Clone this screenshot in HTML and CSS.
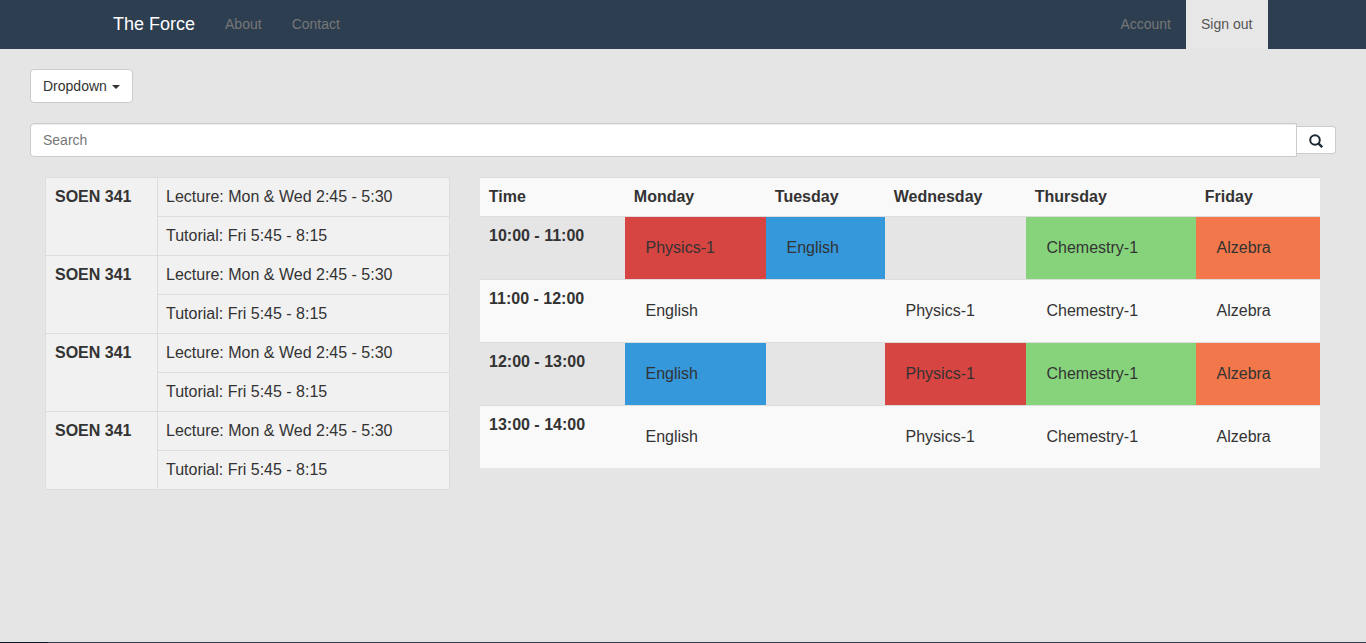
FILE: index.html
```html
<!DOCTYPE html>
<html lang="en">
<head>
  <meta charset="UTF-8">
  <title>The Force</title>
  <link rel="stylesheet" href="styles.css">
</head>
<body>
  <nav class="navbar">
    <a class="brand" href="#">The Force</a>
    <a class="nav-link" href="#">About</a>
    <a class="nav-link" href="#">Contact</a>
    <a class="nav-link nav-right" href="#">Account</a>
    <a class="nav-link active" href="#">Sign out</a>
  </nav>
  <main class="content">
    <button class="btn dropdown-btn" type="button">Dropdown <span class="caret"></span></button>
    <form class="search">
      <input class="search-input" type="text" placeholder="Search">
      <button class="btn search-btn" type="button" aria-label="Search">
        <svg class="search-icon" width="14" height="14" viewBox="0 0 14 14"><circle cx="6" cy="6" r="4.8" fill="none" stroke="#1f2a33" stroke-width="2"/><path d="M9.4 9.4l3.8 3.8" stroke="#1f2a33" stroke-width="2.4"/></svg>
      </button>
    </form>
    <div class="tables">
      <table class="courses">
        <tbody>
          <tr><th rowspan="2">SOEN 341</th><td>Lecture: Mon &amp; Wed 2:45 - 5:30</td></tr>
          <tr><td>Tutorial: Fri 5:45 - 8:15</td></tr>
          <tr><th rowspan="2">SOEN 341</th><td>Lecture: Mon &amp; Wed 2:45 - 5:30</td></tr>
          <tr><td>Tutorial: Fri 5:45 - 8:15</td></tr>
          <tr><th rowspan="2">SOEN 341</th><td>Lecture: Mon &amp; Wed 2:45 - 5:30</td></tr>
          <tr><td>Tutorial: Fri 5:45 - 8:15</td></tr>
          <tr><th rowspan="2">SOEN 341</th><td>Lecture: Mon &amp; Wed 2:45 - 5:30</td></tr>
          <tr><td>Tutorial: Fri 5:45 - 8:15</td></tr>
        </tbody>
      </table>
      <table class="schedule">
        <colgroup>
          <col class="col-time"><col class="col-mon"><col class="col-tue"><col class="col-wed"><col class="col-thu"><col class="col-fri">
        </colgroup>
        <thead>
          <tr><th>Time</th><th>Monday</th><th>Tuesday</th><th>Wednesday</th><th>Thursday</th><th>Friday</th></tr>
        </thead>
        <tbody>
          <tr>
            <th>10:00 - 11:00</th>
            <td class="red"><div class="slot">Physics-1</div></td>
            <td class="blue"><div class="slot">English</div></td>
            <td></td>
            <td class="green"><div class="slot">Chemestry-1</div></td>
            <td class="orange"><div class="slot">Alzebra</div></td>
          </tr>
          <tr>
            <th>11:00 - 12:00</th>
            <td><div class="slot">English</div></td>
            <td></td>
            <td><div class="slot">Physics-1</div></td>
            <td><div class="slot">Chemestry-1</div></td>
            <td><div class="slot">Alzebra</div></td>
          </tr>
          <tr>
            <th>12:00 - 13:00</th>
            <td class="blue"><div class="slot">English</div></td>
            <td></td>
            <td class="red"><div class="slot">Physics-1</div></td>
            <td class="green"><div class="slot">Chemestry-1</div></td>
            <td class="orange"><div class="slot">Alzebra</div></td>
          </tr>
          <tr>
            <th>13:00 - 14:00</th>
            <td><div class="slot">English</div></td>
            <td></td>
            <td><div class="slot">Physics-1</div></td>
            <td><div class="slot">Chemestry-1</div></td>
            <td><div class="slot">Alzebra</div></td>
          </tr>
        </tbody>
      </table>
    </div>
  </main>
  <footer class="bottom-line"><span class="bottom-dark"></span></footer>
</body>
</html>
```

FILE: styles.css
```css
* { box-sizing: border-box; }
html, body { height: 100%; }
body { margin: 0; display: flex; flex-direction: column; font-family: "Liberation Sans", Arial, sans-serif; font-size: 14px; line-height: 20px; color: #333; background-color: #e5e5e5; overflow: hidden; }

.navbar { display: flex; flex: none; height: 49px; padding: 0 98px; background-color: #2c3e50; }
.navbar a { display: block; padding: 14px 15px; text-decoration: none; }
.navbar .brand { font-size: 18px; color: #fff; }
.nav-link { color: #777; }
.nav-right { margin-left: auto; }
.navbar .active { min-width: 82px; background-color: #e7e7e7; color: #555; }

.content { flex: 1; padding: 20px 30px 0; }
.btn { font-family: inherit; font-size: 14px; color: #333; background-color: #fff; border: 1px solid #ccc; }
.dropdown-btn { display: block; height: 34px; padding: 6px 12px; border-radius: 4px; }
.caret { display: inline-block; margin-left: 1px; vertical-align: middle; border-top: 4px solid #333; border-left: 4px solid transparent; border-right: 4px solid transparent; }

.search { display: flex; align-items: center; margin-top: 20px; }
.search-input { flex: 1; height: 34px; padding: 6px 12px; font-family: inherit; font-size: 14px; color: #555; background-color: #fff; border: 1px solid #ccc; border-radius: 4px 0 0 4px; box-shadow: inset 0 1px 1px rgba(0,0,0,0.075); }
.search-input::placeholder { color: #777; }
.search-btn { display: flex; align-items: center; justify-content: center; flex: none; width: 39px; height: 28px; padding: 0; border-left: 0; border-radius: 0 4px 4px 0; }
.search-icon { margin-top: 1px; }

.tables { display: flex; align-items: flex-start; gap: 30px; margin: 20px 0 0 15px; }
table { border-collapse: collapse; font-size: 16px; line-height: 22px; }
th, td { padding: 8px; text-align: left; vertical-align: top; }

.courses { width: 405px; flex: none; background-color: #f1f1f1; }
.courses th, .courses td { padding: 8px; border: 1px solid #ddd; }
.courses th { width: 112px; padding-left: 9px; }

.schedule { width: 840px; flex: none; table-layout: fixed; background-color: #f9f9f9; }
.schedule tr { border-top: 1px solid #ddd; }
.schedule thead th { padding: 8px 8.8px; }
.schedule tbody th { padding: 8px 9px; }
.schedule tbody tr:nth-child(odd) { background-color: #e5e5e5; }
.schedule tbody td { padding: 8px; }
.slot { padding: 12px 12.5px; }
.col-time { width: 145px; }
.col-mon { width: 141px; }
.col-tue { width: 119px; }
.col-wed { width: 141px; }
.col-thu { width: 170px; }
.col-fri { width: 124px; }
.schedule .red { background-color: #d64541; }
.schedule .blue { background-color: #3498db; }
.schedule .green { background-color: #87d37c; }
.schedule .orange { background-color: #f2784b; }

.bottom-line { flex: none; height: 1px; background-color: #2c3e50; }
.bottom-dark { display: block; width: 48px; height: 1px; background-color: #0b1a2a; }
```
